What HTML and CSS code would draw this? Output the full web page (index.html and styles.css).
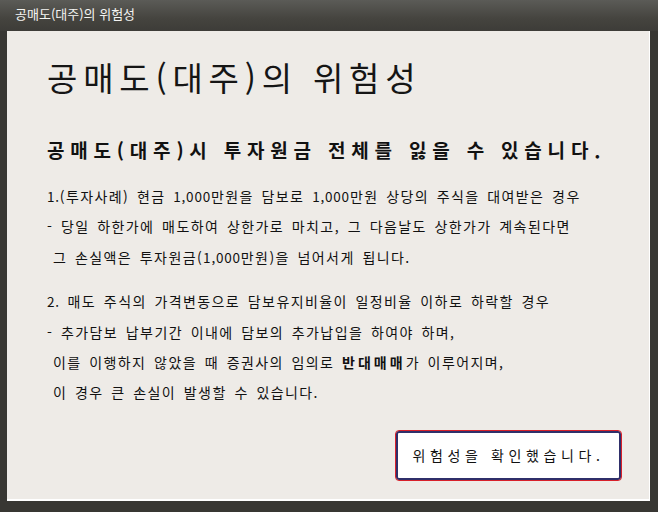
FILE: index.html
```html
<!DOCTYPE html>
<html lang="ko">
<head>
<meta charset="utf-8">
<title>공매도(대주)의 위험성</title>
<link rel="stylesheet" href="styles.css">
</head>
<body>
<div class="window">
  <div class="titlebar">공매도(대주)의 위험성</div>
  <div class="panel">
    <h1 class="heading">공매도(대주)의 위험성</h1>
    <h2 class="subheading">공매도(대주)시 투자원금 전체를 잃을 수 있습니다.</h2>
    <div class="block">
      <p class="line"><span class="num">1.</span>(투자사례) 현금 <span class="num">1,000</span>만원을 담보로 <span class="num">1,000</span>만원 상당의 주식을 대여받은 경우</p>
      <p class="line">- 당일 하한가에 매도하여 상한가로 마치고, 그 다음날도 상한가가 계속된다면</p>
      <p class="line indent">그 손실액은 투자원금(<span class="num">1,000</span>만원)을 넘어서게 됩니다.</p>
    </div>
    <div class="block second">
      <p class="line"><span class="num">2.</span> 매도 주식의 가격변동으로 담보유지비율이 일정비율 이하로 하락할 경우</p>
      <p class="line">- 추가담보 납부기간 이내에 담보의 추가납입을 하여야 하며,</p>
      <p class="line indent">이를 이행하지 않았을 때 증권사의 임의로 <b>반대매매</b>가 이루어지며,</p>
      <p class="line indent">이 경우 큰 손실이 발생할 수 있습니다.</p>
    </div>
    <div class="actions">
      <button class="confirm" type="button">위험성을 확인했습니다.</button>
    </div>
  </div>
</div>
</body>
</html>
```
FILE: styles.css
```css
html, body {
  margin: 0;
  padding: 0;
}
body {
  width: 658px;
  height: 512px;
  background: #383733;
  font-family: "Noto Sans CJK KR", "Noto Sans", sans-serif;
  overflow: hidden;
}
.window {
  display: flex;
  flex-direction: column;
  height: 512px;
}
.titlebar {
  height: 31px;
  box-sizing: border-box;
  padding: 4px 0 0 15px;
  color: #f4f4f2;
  font-size: 13px;
  line-height: 20px;
  background: linear-gradient(#5b5b57, #45443f 60%, #3d3c38);
}
.panel {
  margin: 0 8px 0 7px;
  height: 470px;
  box-sizing: border-box;
  background: #eeebe7;
  border-right: 1px solid #ffffff;
  border-bottom: 2px solid #ffffff;
  padding: 22px 0 0 40px;
  color: #111;
}
.heading {
  margin: 0;
  font-weight: normal;
  font-size: 33px;
  line-height: 48px;
  letter-spacing: 5.8px;
  color: #151515;
}
.subheading {
  margin: 35px 0 0 0;
  font-size: 19px;
  line-height: 28px;
  letter-spacing: 5.8px;
  font-weight: bold;
  color: #111;
}
.block {
  margin-top: 17px;
}
.block.second {
  margin-top: 14px;
}
.line {
  margin: 0;
  font-size: 14px;
  line-height: 30.4px;
  letter-spacing: 1.4px;
  word-spacing: 2.4px;
  white-space: pre;
  color: #111;
}
.line .num {
  font-size: 13.5px;
  letter-spacing: 0.8px;
}
.line.indent {
  padding-left: 6px;
}
.line b {
  font-weight: bold;
  letter-spacing: 3px;
}
.actions {
  display: flex;
  justify-content: flex-end;
  padding-right: 28px;
  margin-top: 23px;
}
.confirm {
  width: 225px;
  height: 49px;
  background: #ffffff;
  border: 2px solid #2f2f6a;
  outline: 1px solid #d8202a;
  border-radius: 3px;
  font-family: "Noto Sans CJK KR", sans-serif;
  font-size: 14px;
  letter-spacing: 4.6px;
  color: #111;
  padding: 0;
}
```
